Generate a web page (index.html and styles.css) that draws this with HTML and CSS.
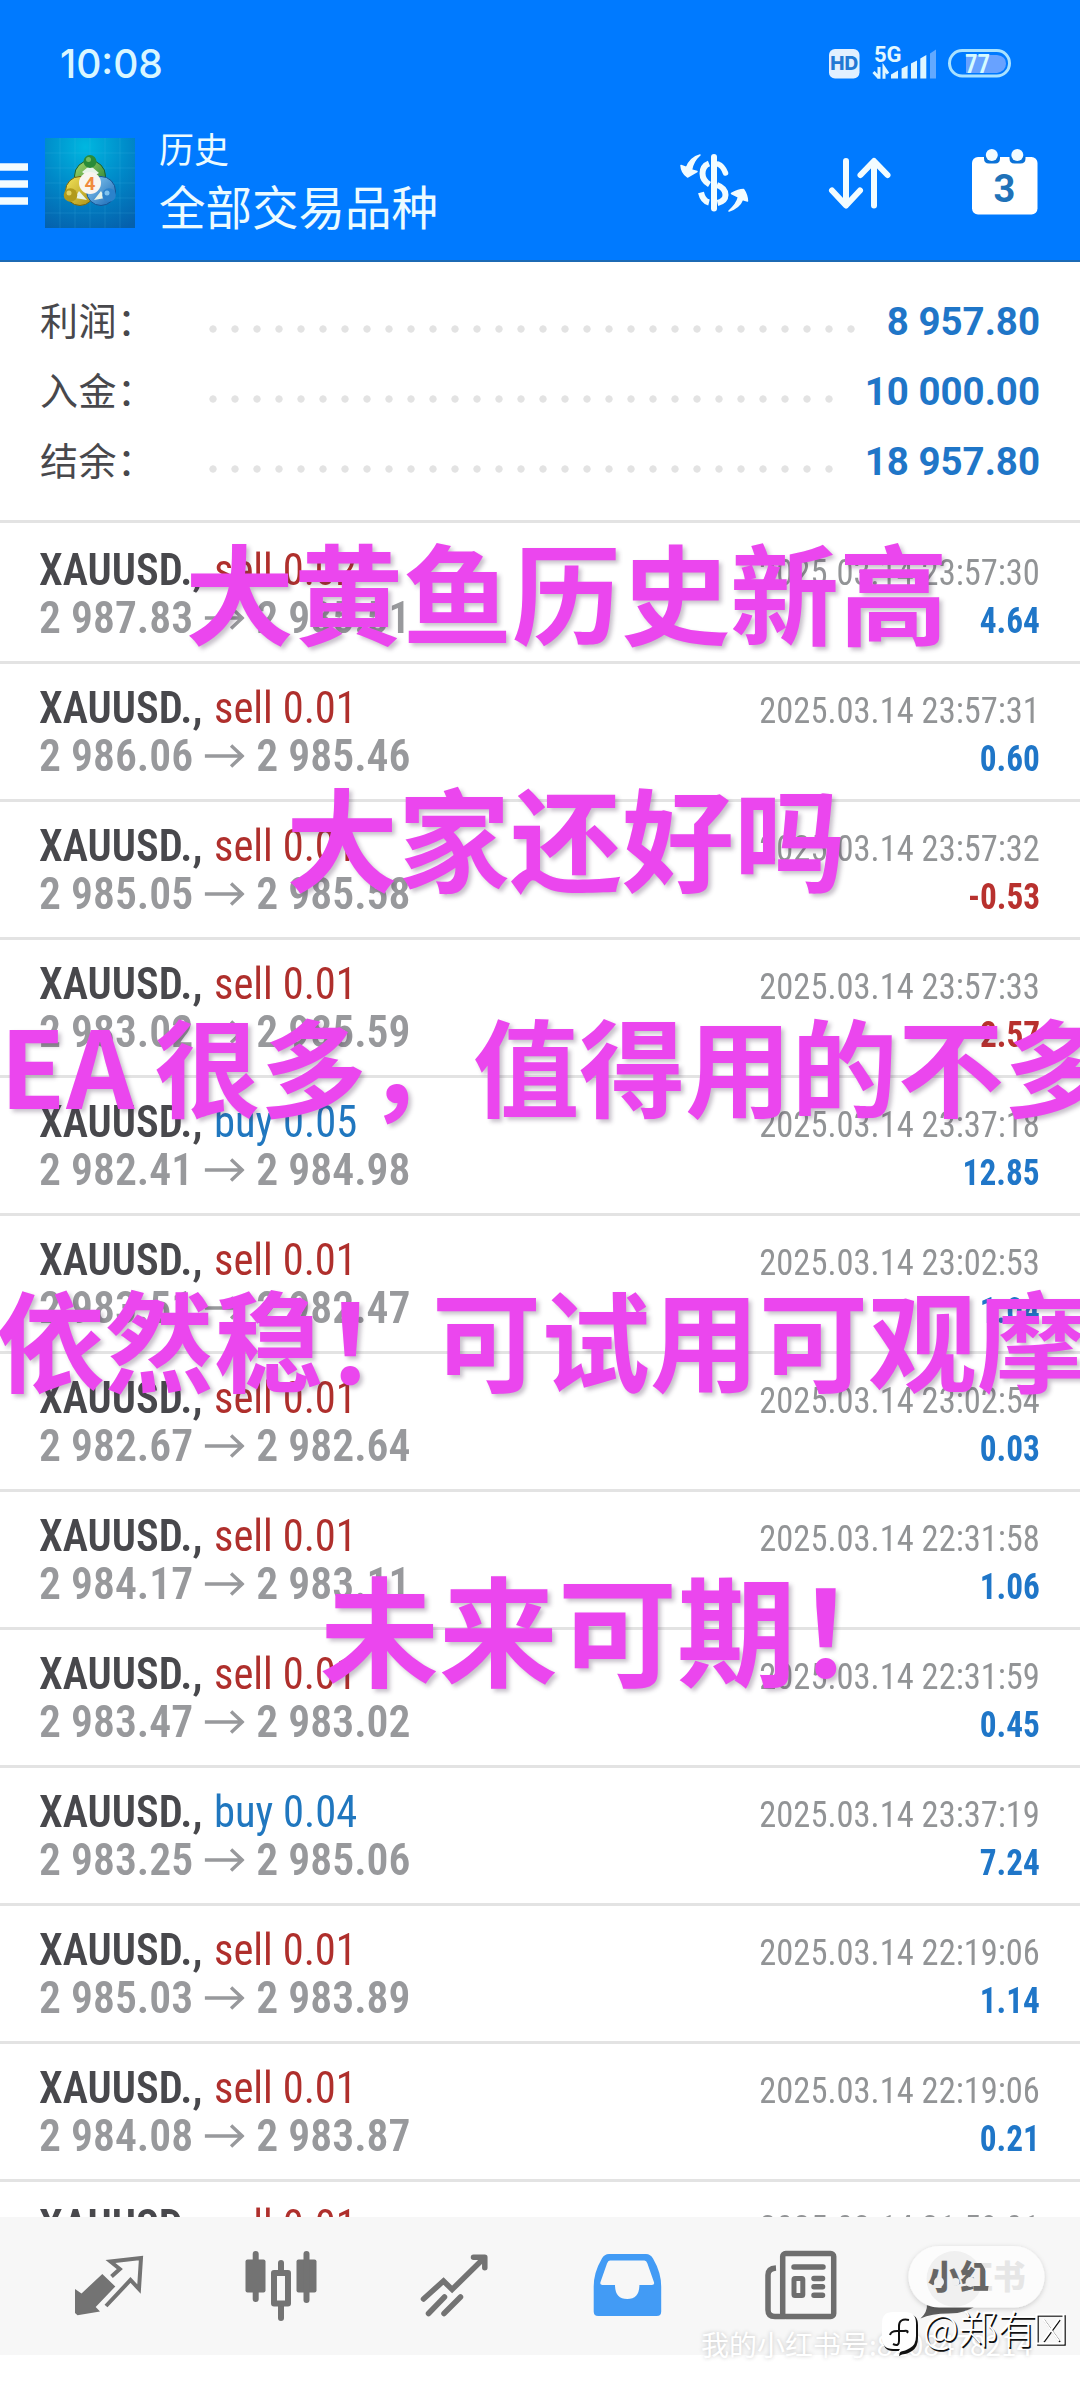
FILE: index.html
```html
<!DOCTYPE html>
<html lang="zh-CN">
<head>
<meta charset="utf-8">
<title>历史</title>
<link rel="stylesheet" href="styles.css">
</head>
<body>
<div class="app">
  <header class="header">
    <div class="status">
      <span class="clock">10:08</span>
      <svg class="status-icons" viewBox="826 40 190 44" width="190" height="44">
        <rect x="830" y="49" width="30.5" height="29.5" rx="6" fill="#e2f0ff"/>
        <text x="845.3" y="69.8" class="hd">HD</text>
        <text x="875" y="61.5" class="five-g">5G</text>
        <path d="M880 67v11.700M880 78l-5.500-6M885 78.700v-11l4 6" stroke="#dff6ff" stroke-width="3" fill="none"/>
        <g fill="#dff6ff"><path d="M892 78.500v-4l7-4v8z"/><path d="M902.600 78.500v-10l6-3v13z"/><path d="M912 78.500v-15l6-3v18z"/><path d="M921.300 78.500v-20l6-3.500v23.500z"/></g>
        <path d="M931 78.500v-25l6-4v29z" fill="#62a9ff"/>
        <rect x="950.500" y="50.500" width="60" height="25.500" rx="12.700" fill="none" stroke="#a9e2ff" stroke-width="3"/>
        <path d="M967 55h31q9 1 9 8.500t-9 9.500h-31z" fill="#68a2ff"/>
        <text x="978.500" y="72.500" class="batt">77</text>
      </svg>
    </div>
    <div class="toolbar">
      <svg class="menu" viewBox="0 0 28 42" width="28" height="42"><path d="M0 4h28M0 21h28M0 38h28" stroke="#f2fcff" stroke-width="7.500"/></svg>
      <svg class="logo" viewBox="0 0 90 90" width="90" height="90">
        <defs>
          <radialGradient id="bg" cx=".45" cy=".1" r="1"><stop offset="0" stop-color="#00b7e0"/><stop offset=".5" stop-color="#0088c8"/><stop offset="1" stop-color="#0560ac"/></radialGradient>
          <linearGradient id="gr" x2="1" y2="1"><stop offset="0" stop-color="#a5d86c"/><stop offset="1" stop-color="#1c7a2d"/></linearGradient>
          <linearGradient id="ye" x2="1" y2="1"><stop offset="0" stop-color="#f3e45a"/><stop offset="1" stop-color="#a88d13"/></linearGradient>
          <linearGradient id="bl" x2="1" y2="1"><stop offset="0" stop-color="#8fd0f5"/><stop offset="1" stop-color="#1666b4"/></linearGradient>
        </defs>
        <rect width="90" height="90" fill="url(#bg)"/>
        <path d="M15 0v90M30 0v90M45 0v90M60 0v90M75 0v90M0 15h90M0 30h90M0 45h90M0 60h90M0 75h90" stroke="#5fd0f0" stroke-opacity=".15"/>
        <circle cx="45" cy="38" r="15.500" fill="url(#gr)" stroke="#165f30"/>
        <circle cx="35" cy="53" r="14.500" fill="url(#ye)" stroke="#726412"/>
        <circle cx="56" cy="53" r="14.500" fill="url(#bl)" stroke="#155494"/>
        <path d="M37 34l6-5h4l7 6-9 5zM30 60l4-7 8 9zM60 60l-4-7-7 9z" fill="#e7f4e8"/>
        <circle cx="45" cy="23.500" r="6.500" fill="#298b38"/><circle cx="43.500" cy="21.500" r="2.500" fill="#75bd60"/>
        <circle cx="25.500" cy="57" r="6.800" fill="#b19a1b"/><circle cx="24" cy="55" r="2.500" fill="#e3d360"/>
        <circle cx="64" cy="57" r="6.800" fill="#2b82cb"/><circle cx="62" cy="55" r="2.500" fill="#7fc3ef"/>
        <circle cx="45" cy="45" r="11" fill="#f8f5f0"/>
        <text x="45" y="51.500" class="four">4</text>
      </svg>
      <div class="titles"><div class="title">历史</div><div class="subtitle">全部交易品种</div></div>
      <svg class="actions" viewBox="675 144 369 76" width="369" height="76">
        <g fill="none" stroke="#f2fcff" stroke-width="6" stroke-linecap="round" stroke-linejoin="round">
          <path d="M715 157v51.500"/>
          <path stroke-width="5.500" d="M719 164q5 2 7.500 9"/>
          <path stroke-width="6" stroke-linecap="butt" d="M710 163.500q-6.500 2.500-6.500 10 0 7 7 11M718 185q8.500 3 8.500 10 0 6-8 8M710 202.500q-6-1.500-8-10"/>
          <path d="M847 161v44M833 190.500l14 15 14-15M875 205.500v-44M861.500 175l13.500-14 13.500 14"/>
        </g>
        <path d="M701 155q-7 6-8.500 15l5.500 1.500-9.500 5.500q-6-4-6.500-11.500l5.500 2q4-10 13.500-12.500zM730 211q8-7 9.500-14l-7-3.500q7-4 12-4 3.500 5 4 11.500l-5-1.500q-3 8-13.500 11.500z" fill="#f2fcff" stroke="#f2fcff" stroke-width="1.500" stroke-linejoin="round"/>
        <rect x="973" y="157" width="65.500" height="57.500" rx="6" fill="#fff"/>
        <path d="M985 156.500v2q0 5 5 5h6q5 0 5-5v-2zM1010.500 156.500v2q0 5 5 5h6q5 0 5-5v-2z" fill="#0b72d8"/>
        <circle cx="992.800" cy="155" r="6" fill="#f2fcff"/><circle cx="1018.300" cy="155" r="6" fill="#f2fcff"/>
        <text x="1005.500" y="202" class="day">3</text>
      </svg>
    </div>
  </header>

  <section class="summary">
    <div class="sum"><span class="label">利润：</span><span class="dots"></span><b>8 957.80</b></div>
    <div class="sum"><span class="label">入金：</span><span class="dots"></span><b>10 000.00</b></div>
    <div class="sum"><span class="label">结余：</span><span class="dots"></span><b>18 957.80</b></div>
  </section>

  <main class="deals">
    <div class="deal first"><div class="line"><span class="name"><b>XAUUSD.,</b> <i>sell 0.02</i></span><time>2025.03.14 23:57:30</time></div><div class="line"><span class="price">2 987.83<svg class="arr" viewBox="0 0 40 24"><path d="M0 12h38M27 1.500l11.500 10.500-11.500 10.500"/></svg>2 985.51</span><span class="pl">4.64</span></div></div>
    <div class="deal"><div class="line"><span class="name"><b>XAUUSD.,</b> <i>sell 0.01</i></span><time>2025.03.14 23:57:31</time></div><div class="line"><span class="price">2 986.06<svg class="arr" viewBox="0 0 40 24"><path d="M0 12h38M27 1.500l11.500 10.500-11.500 10.500"/></svg>2 985.46</span><span class="pl">0.60</span></div></div>
    <div class="deal"><div class="line"><span class="name"><b>XAUUSD.,</b> <i>sell 0.01</i></span><time>2025.03.14 23:57:32</time></div><div class="line"><span class="price">2 985.05<svg class="arr" viewBox="0 0 40 24"><path d="M0 12h38M27 1.500l11.500 10.500-11.500 10.500"/></svg>2 985.58</span><span class="pl loss">-0.53</span></div></div>
    <div class="deal"><div class="line"><span class="name"><b>XAUUSD.,</b> <i>sell 0.01</i></span><time>2025.03.14 23:57:33</time></div><div class="line"><span class="price">2 983.02<svg class="arr" viewBox="0 0 40 24"><path d="M0 12h38M27 1.500l11.500 10.500-11.500 10.500"/></svg>2 985.59</span><span class="pl loss">-2.57</span></div></div>
    <div class="deal"><div class="line"><span class="name"><b>XAUUSD.,</b> <i class="buy">buy 0.05</i></span><time>2025.03.14 23:37:18</time></div><div class="line"><span class="price">2 982.41<svg class="arr" viewBox="0 0 40 24"><path d="M0 12h38M27 1.500l11.500 10.500-11.500 10.500"/></svg>2 984.98</span><span class="pl">12.85</span></div></div>
    <div class="deal"><div class="line"><span class="name"><b>XAUUSD.,</b> <i>sell 0.01</i></span><time>2025.03.14 23:02:53</time></div><div class="line"><span class="price">2 983.51<svg class="arr" viewBox="0 0 40 24"><path d="M0 12h38M27 1.500l11.500 10.500-11.500 10.500"/></svg>2 982.47</span><span class="pl">1.04</span></div></div>
    <div class="deal"><div class="line"><span class="name"><b>XAUUSD.,</b> <i>sell 0.01</i></span><time>2025.03.14 23:02:54</time></div><div class="line"><span class="price">2 982.67<svg class="arr" viewBox="0 0 40 24"><path d="M0 12h38M27 1.500l11.500 10.500-11.500 10.500"/></svg>2 982.64</span><span class="pl">0.03</span></div></div>
    <div class="deal"><div class="line"><span class="name"><b>XAUUSD.,</b> <i>sell 0.01</i></span><time>2025.03.14 22:31:58</time></div><div class="line"><span class="price">2 984.17<svg class="arr" viewBox="0 0 40 24"><path d="M0 12h38M27 1.500l11.500 10.500-11.500 10.500"/></svg>2 983.11</span><span class="pl">1.06</span></div></div>
    <div class="deal"><div class="line"><span class="name"><b>XAUUSD.,</b> <i>sell 0.01</i></span><time>2025.03.14 22:31:59</time></div><div class="line"><span class="price">2 983.47<svg class="arr" viewBox="0 0 40 24"><path d="M0 12h38M27 1.500l11.500 10.500-11.500 10.500"/></svg>2 983.02</span><span class="pl">0.45</span></div></div>
    <div class="deal"><div class="line"><span class="name"><b>XAUUSD.,</b> <i class="buy">buy 0.04</i></span><time>2025.03.14 23:37:19</time></div><div class="line"><span class="price">2 983.25<svg class="arr" viewBox="0 0 40 24"><path d="M0 12h38M27 1.500l11.500 10.500-11.500 10.500"/></svg>2 985.06</span><span class="pl">7.24</span></div></div>
    <div class="deal"><div class="line"><span class="name"><b>XAUUSD.,</b> <i>sell 0.01</i></span><time>2025.03.14 22:19:06</time></div><div class="line"><span class="price">2 985.03<svg class="arr" viewBox="0 0 40 24"><path d="M0 12h38M27 1.500l11.500 10.500-11.500 10.500"/></svg>2 983.89</span><span class="pl">1.14</span></div></div>
    <div class="deal"><div class="line"><span class="name"><b>XAUUSD.,</b> <i>sell 0.01</i></span><time>2025.03.14 22:19:06</time></div><div class="line"><span class="price">2 984.08<svg class="arr" viewBox="0 0 40 24"><path d="M0 12h38M27 1.500l11.500 10.500-11.500 10.500"/></svg>2 983.87</span><span class="pl">0.21</span></div></div>
    <div class="deal"><div class="line"><span class="name"><b>XAUUSD.,</b> <i>sell 0.01</i></span><time>2025.03.14 21:59:01</time></div></div>
  </main>

  <nav class="tabs">
    <svg class="tab" viewBox="22 2217 173 138">
      <path d="M75 2289l6.500 4.500 20.800-19.500 13 12.500-19.600 20.500 4.300 4.500-22.500 3.800-2.500-2.300z" fill="#737373"/>
      <path d="M111.500 2276.500l8.300-7.500-9.300-7.500 30.500-3.500-2 31-8.500-9-24.500 26" stroke="#737373" stroke-width="4" fill="none"/>
    </svg>
    <svg class="tab" viewBox="195 2217 173 138">
      <g fill="#737373"><rect x="245.500" y="2259.500" width="20" height="33" rx="2"/><rect x="252.700" y="2251" width="6" height="51" rx="3"/><rect x="296.500" y="2259.500" width="20" height="33" rx="2"/><rect x="303.500" y="2251" width="6" height="52" rx="3"/><rect x="278" y="2260" width="6" height="15" rx="3"/><rect x="278" y="2302" width="6" height="19" rx="3"/></g>
      <rect x="274" y="2273" width="14" height="30.500" fill="none" stroke="#737373" stroke-width="6" stroke-linejoin="round"/>
    </svg>
    <svg class="tab" viewBox="368 2217 173 138">
      <path d="M423.500 2299l20-18 8.600 8.500 32-31.500M428.500 2313.500l16-16.500M444 2313.500l16.500-16.500" stroke="#737373" stroke-width="5.500" stroke-linecap="round" fill="none"/>
      <path d="M473.500 2257.200h11.300v10.500" stroke="#737373" stroke-width="5.500" stroke-linecap="round" stroke-linejoin="round" fill="none"/>
    </svg>
    <svg class="tab" viewBox="541 2217 173 138">
      <path fill-rule="evenodd" fill="#429bf5" d="M609 2254h37q4.500 0 7 4.500 8.200 14 8.200 28v25q0 4.500-4.500 4.500h-58.500q-4.500 0-4.500-4.500v-25q0-14 8.200-28 2.500-4.500 7.100-4.500zm1 6.500q-2 0-3 3l-6.500 18.500q-1 3 2 3h12.500q0 14 12.200 14t12.200-14h12.500q3 0 2-3l-6.500-18.500q-1-3-3-3z"/>
    </svg>
    <svg class="tab" viewBox="714 2217 173 138">
      <rect x="782.700" y="2253.500" width="51" height="63" rx="3" fill="none" stroke="#6e6e6e" stroke-width="5.500"/>
      <path d="M776 2268q-8 .5-8 7v35q0 6.500 7 6.500h10" fill="none" stroke="#6e6e6e" stroke-width="5.500"/>
      <path d="M794 2267h29M814 2278.500h8.500M814 2286.700h8.500M814 2295.200h8.500" stroke="#6e6e6e" stroke-width="5.500" stroke-linecap="round"/>
      <rect x="794" y="2278.500" width="8.800" height="17" rx="1" fill="none" stroke="#6e6e6e" stroke-width="5"/>
    </svg>
    <svg class="tab wide" viewBox="887 2217 193 138">
      <defs>
        <clipPath id="cc"><circle cx="954.600" cy="2284" r="34"/></clipPath>
        <filter id="ds" x="-20%" y="-20%" width="140%" height="150%"><feDropShadow dx="0" dy="1.500" stdDeviation="2.500" flood-opacity=".18"/></filter>
      </defs>
      <path d="M920.500 2318.500q7-6 6.500-15h52q-12 10-30.500 10-17 0-28 5z" fill="#5d5d5d"/>
      <rect x="908.500" y="2246" width="136" height="61.500" rx="30.700" fill="#fcfcfc" filter="url(#ds)"/>
      <circle cx="954.600" cy="2279" r="28" fill="#f0f0f0"/>
      <text x="928" y="2289" class="xhs pale">小红书</text>
      <text x="928" y="2289" class="xhs" clip-path="url(#cc)">小红书</text>
      <g fill="#efefef"><circle cx="939" cy="2282" r="5"/><circle cx="955.500" cy="2282" r="4"/><circle cx="970.500" cy="2282" r="5"/></g>
    </svg>
  </nav>

  <div class="caption c1">大黄鱼历史新高</div>
  <div class="caption c2">大家还好吗</div>
  <div class="caption c3"><span>EA</span>很多，值得用的不多</div>
  <div class="caption c4">依然稳！可试用可观摩</div>
  <div class="caption c5">未来可期！</div>

  <div class="account">我的小红书号:8208478214</div>
  <div class="author">
    <svg class="note" viewBox="0 0 38 46" width="38" height="46">
      <path d="M18 45q0-3 2-5h-8Q2 40 2 28V13Q2 3 12 3h14q11 0 11 11v13q0 9-6 13-5 3-7 3-3 0-6 2z" fill="#111"/>
      <path d="M17 43q0-3 2-5h-7Q1 38 1 27V12Q1 1 12 1h12q11 0 11 11v13q0 9-6 12-5 3-7 3-3 0-5 3z" fill="#fff"/>
      <path d="M28 9q-10-2-10 6v15q0 6-6 3M9 24q1-4 7-4h7q5-1 3 2" fill="none" stroke="#111" stroke-width="2"/>
    </svg>
    <span>@郑有</span>
    <svg class="tofu" viewBox="0 0 32 34" width="32" height="34"><path d="M3 3h27v29H3zM9 7l16 22M25 7L9 29" fill="none" stroke="#111" stroke-width="1.600"/><path d="M1.500 1.500h27v29h-27zM8 6l16 22M24 6L8 28" fill="none" stroke="#fff" stroke-width="2"/></svg>
  </div>
</div>
</body>
</html>
```
FILE: styles.css
```css
* { box-sizing: border-box; }
body { margin: 0; background: #fff; font-family: Roboto, "Noto Sans CJK SC", sans-serif; }
.app { position: relative; width: 1080px; height: 2391px; overflow: hidden; display: flex; flex-direction: column; background: #fff; }

.header { flex: none; height: 262px; background: #007aff; border-bottom: 2px solid #1c6ab4; color: #ecfbff; }
.status { height: 124px; padding: 40px 65px 0 60px; display: flex; justify-content: space-between; }
.clock { font: 500 39px/48px Inter, sans-serif; color: #d9f6ff; }
.hd { font: 800 19px Inter, sans-serif; fill: #2379d4; text-anchor: middle; }
.five-g { font: 700 22px Roboto, sans-serif; fill: #e2f8ff; }
.batt { font: 600 25px Roboto, sans-serif; fill: #d5fbff; text-anchor: middle; font-stretch: 85%; }
.toolbar { display: flex; align-items: flex-start; padding-right: 37px; }
.menu { margin: 39px 17px 0 0; }
.logo { margin: 14px 24px 0 0; }
.four { font: 700 19px Roboto, sans-serif; fill: #f08a3c; text-anchor: middle; }
.titles { flex: 1; font-family: "Noto Sans CJK SC", sans-serif; white-space: nowrap; }
.title { font-size: 35px; line-height: 48px; }
.subtitle { font-size: 46.5px; line-height: 65px; }
.actions { margin-top: 20px; }
.day { font: 700 38px Roboto, sans-serif; fill: #2072b8; text-anchor: middle; }

.summary { flex: none; height: 258px; padding: 25px 40px 0; }
.sum { height: 70px; display: flex; align-items: center; }
.label { width: 166px; font: 400 38px/64px "Noto Sans CJK SC", sans-serif; color: #48484c; letter-spacing: .5px; margin-top: -6px; }
.dots { flex: 1; height: 8px; margin-right: 29px; margin-top: 13px; background: radial-gradient(circle at 7px 4px, #e3e3e3 3.3px, transparent 4px) 0 0 / 22px 8px repeat-x; }
.sum b { font: 700 38.5px/70px Roboto, sans-serif; color: #1f76c8; text-align: right; }

.deals { flex: 1; overflow: hidden; border-top: 3px solid #e3e3e3; }
.deal { height: 138px; padding: 17px 40px 0 39px; border-bottom: 3px solid #e3e3e3; font-stretch: 75%; }
.deal.first { height: 141px; padding-top: 20px; }
.line { display: flex; justify-content: space-between; height: 48px; line-height: 54px; white-space: nowrap; }
.name, .price { font-size: 45px; transform: scaleX(.945); transform-origin: 0 50%; }
.name b { font-weight: 600; color: #48484c; }
.name i { font-style: normal; color: #af2f2c; margin-left: 2px; }
.name .buy { color: #2077bf; }
.price { font-weight: 600; color: #98999c; transform: scaleX(.97); display: flex; align-items: center; height: 54px; }
.arr { width: 42px; height: 24px; margin: 0 12px 0 11px; fill: none; stroke: #98999c; stroke-width: 3.5; }
time { font-size: 36px; line-height: 60px; color: #929496; transform: scaleX(.958); transform-origin: 100% 50%; }
.pl { font-size: 37px; font-weight: 700; line-height: 60px; color: #1f76c8; transform: scaleX(.9); transform-origin: 100% 50%; }
.pl.loss { color: #b8312e; }

.tabs { flex: none; height: 138px; margin-bottom: 36px; padding-left: 22px; background: #f7f7f7; display: flex; }
.tab { width: 173px; height: 138px; flex: none; }
.tab.wide { width: 193px; }
.xhs { font: 900 32.5px "Noto Sans CJK SC", sans-serif; fill: #666; }
.xhs.pale { fill: #e6e6e6; }

.caption { position: absolute; font: 700 109px/140px "Noto Sans CJK SC", sans-serif; color: #eb46ee; white-space: nowrap; text-shadow: 3px 3px 4px rgba(70, 50, 80, .3); }
.c1 { left: 185px; top: 520px; }
.c2 { left: 286px; top: 765px; font-size: 112px; }
.c3 { left: 0; top: 993px; font-size: 106.2px; }
.c3 span { margin-right: 19px; letter-spacing: 1px; }
.c4 { left: -4px; top: 1267px; }
.c5 { left: 320px; top: 1556px; font-size: 119px; }

.account { position: absolute; left: 701px; top: 2324px; font: 400 28px/40px "Noto Sans CJK SC", sans-serif; color: #fff; white-space: nowrap; text-shadow: 0 0 4px rgba(0, 0, 0, .22); }
.author { position: absolute; left: 881px; top: 2311px; display: flex; align-items: flex-start; font: 300 39px/44px "Noto Sans CJK SC", sans-serif; color: #fff; text-shadow: 1.500px 1.500px 0 #111; white-space: nowrap; }
.author span { margin-left: 4px; margin-top: -7px; }
.tofu { margin: 2px 0 0 -2px; }
```
